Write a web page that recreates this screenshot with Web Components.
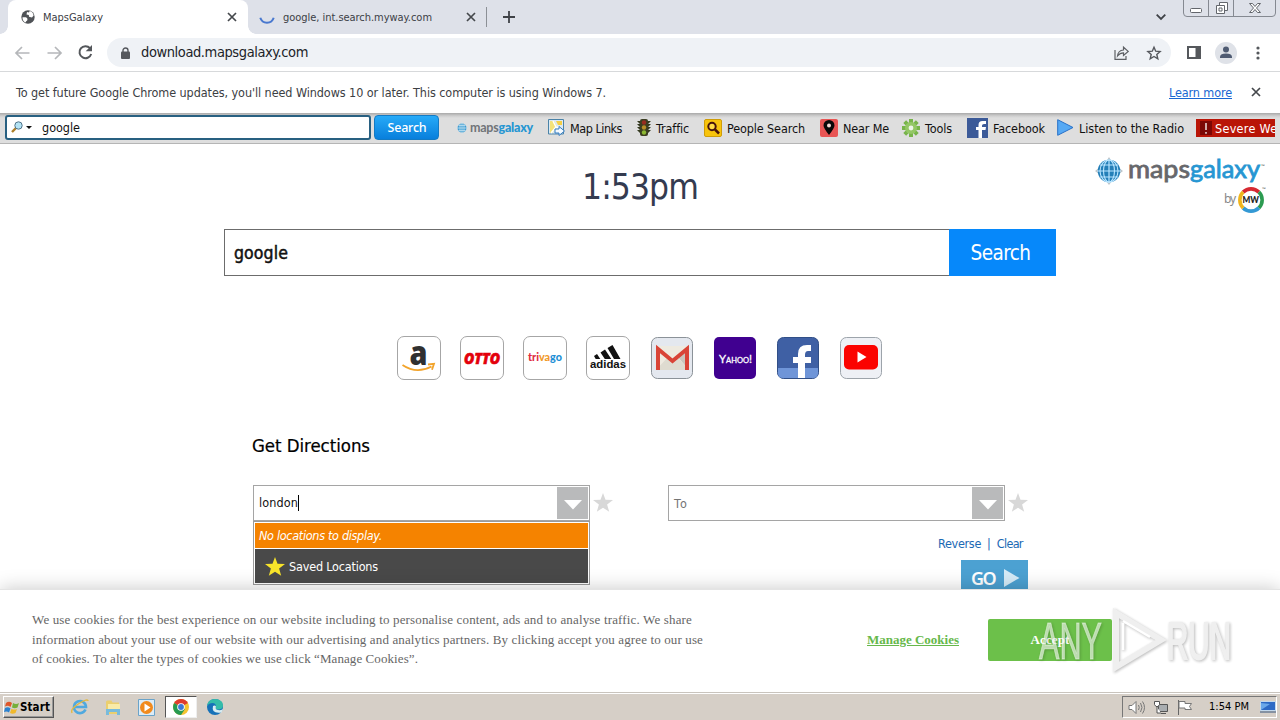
<!DOCTYPE html>
<html lang="en">
<head>
<meta charset="utf-8">
<title>MapsGalaxy</title>
<style>
  html, body { margin: 0; height: 100%; overflow: hidden; background: #fff; }
  body { font: 12.5px/1.2 "DejaVu Sans Condensed", "DejaVu Sans", sans-serif; color: #222; }
</style>
</head>
<body>
<desktop-screen></desktop-screen>
<script>
const ICONS = {
  globe: [14, 14, `<circle cx="7" cy="7" r="6.7" fill="#505357"/><path d="M1.5 7.2h3.2q1.8.3 1.8 2t-1.3 2l-.6 1.3Q1.3 11 1.5 7.2zM6 2l2 .4.7-1.3Q12 2 12.6 5.5L11 7.4 8 6.8 7.8 5 5.5 4.6z" fill="#fff"/>`],
  close: [10, 10, `<path d="M1 1l8 8M9 1L1 9" stroke="#45484c" stroke-width="1.7"/>`],
  spinner: [16, 8, `<path d="M1.3.8a7 7 0 0 0 13.4 0" fill="none" stroke="#4978cf" stroke-width="2"/>`],
  plus: [12, 12, `<path d="M6 0v12M0 6h12" stroke="#3f4247" stroke-width="1.8"/>`],
  chevron: [10, 6, `<path d="M.7.7L5 5 9.3.7" fill="none" stroke="#3f4247" stroke-width="1.8"/>`],
  winbtns: [93, 18, `<path d="M.5 0v13q0 3.5 3.5 3.5h85q3.5 0 3.5-3.5V0M25.5 0v16M50.5 0v16" fill="none" stroke="#858991"/><rect x="7.5" y="8.500" width="11" height="4" rx="1" fill="#fff" stroke="#63666c"/><path d="M36.500 2.500h8v8h-8z" fill="#fff" stroke="#63666c"/><path d="M33.500 5.500h8v8h-8z" fill="#fff" stroke="#63666c"/><path d="M36 8h3v3h-3z" fill="none" stroke="#63666c"/><path d="M66.500 3.500h3l2.500 3 2.500-3h3l-4 4.500 4 4.500h-3L72 9.500l-2.500 3h-3l4-4.500z" fill="#fff" stroke="#63666c"/>`],
  back: [15, 14, `<path d="M14.500 7H1.500M7 1L1 7l6 6" fill="none" stroke="#b5b7ba" stroke-width="1.700"/>`],
  forward: [15, 14, `<path d="M.5 7h13M8 1l6 6-6 6" fill="none" stroke="#b5b7ba" stroke-width="1.700"/>`],
  reload: [15, 15, `<path d="M12 3.200A6 6 0 1 0 13.200 9" fill="none" stroke="#54575b" stroke-width="2"/><path d="M14 0v6.300H7.700z" fill="#54575b"/>`],
  lock: [9, 12, `<path d="M2 5.500V3.500a2.500 2.500 0 0 1 5 0v2" fill="none" stroke="#55585d" stroke-width="1.400"/><rect y="4.500" width="9" height="7.500" rx="1" fill="#55585d"/>`],
  share: [15, 14, `<path d="M1 4v9.300h11V10M3.500 10q.5-5.500 6-6V1.200L14.200 5.400 9.500 9.500V6.800Q6 6.800 3.500 10z" fill="none" stroke="#5d6064" stroke-width="1.200"/>`],
  star: [14, 14, `<path d="M7 1.200l1.700 4 4.400.4-3.300 2.900 1 4.300L7 10.500l-3.800 2.300 1-4.300L.9 5.600l4.400-.4z" fill="none" stroke="#54575c" stroke-width="1.400"/>`],
  panel: [14, 13, `<path d="M1 1h12v11H1z" fill="#fff" stroke="#55585c" stroke-width="2"/><path d="M8.500 1H13v11H8.500z" fill="#55585c"/>`],
  person: [22, 22, `<circle cx="11" cy="11" r="11" fill="#dfe2e8"/><circle cx="11" cy="7.500" r="3" fill="#4f5b72"/><path d="M5 16v-1.500Q5.500 11.500 11 11.500t6 3V16z" fill="#4f5b72"/>`],
  dots: [4, 14, `<g fill="#55585c"><circle cx="2" cy="2" r="1.600"/><circle cx="2" cy="7" r="1.600"/><circle cx="2" cy="12" r="1.600"/></g>`],
  magnifier: [22, 12, `<path d="M0 11l4.500-4.500" stroke="#ad7f28" stroke-width="2.400"/><circle cx="6.500" cy="4.500" r="3.700" fill="#b4e3f4" stroke="#50738a"/><path d="M14 5h6L17 8z" fill="#111"/>`],
  miniGlobe: [12, 12, `<circle cx="6" cy="6" r="4.500" fill="#3d9bd2"/><path d="M0 6h12M6 0v12M2.500 3.500h7M2.500 8.500h7M4 2v8M8 2v8" stroke="#cce6f3" stroke-width=".7"/>`],
  map: [17, 17, `<path d="M.5.500h15v14.500H.5z" fill="#dceaf2" stroke="#4b83a8"/><path d="M2 2h4l3 6-5 6H2z" fill="#f3e27a"/><path d="M8 2h6v4h-4z" fill="#f5cf45"/><path d="M3 14l5-6-3-6M8 8l6 2" stroke="#fff" stroke-width="1.500" fill="none"/><path d="M7 10h4V7.500l5.500 4.500-5.500 4.500V14H7z" fill="#f4faff" stroke="#347dc1"/>`],
  traffic: [14, 17, `<path d="M0 2h14l-3 3h3l-3 3h3l-3 3h3l-3 3H3L0 11h3L0 8h3L0 5h3z" fill="#34391f"/><rect x="3" width="8" height="17" rx="2" fill="#3c3e22"/><circle cx="7" cy="3.500" r="2.200" fill="#982c20"/><circle cx="7" cy="8.500" r="2.200" fill="#b88e28"/><circle cx="7" cy="13.500" r="2.200" fill="#8db832"/>`],
  people: [18, 18, `<rect x=".5" y=".5" width="17" height="17" rx="1.500" fill="#f8c40c" stroke="#cf9d08"/><circle cx="8" cy="7.500" r="3.700" fill="#ffdd47" stroke="#47140c" stroke-width="2"/><path d="M11 10.500l4 4" stroke="#47140c" stroke-width="2.500"/>`],
  pin: [18, 18, `<rect width="18" height="18" rx="2" fill="#e85655"/><path d="M9 16Q3.500 9 3.500 6.500a5.500 5.500 0 0 1 11 0Q14.500 9 9 16z" fill="#090909"/><circle cx="9" cy="6.500" r="2" fill="#f6dad5"/>`],
  gear: [18, 18, `<g stroke="#78b44b" stroke-width="4"><path d="M9 0v18M0 9h18M2.700 2.700l12.600 12.600M15.300 2.700L2.700 15.300"/></g><circle cx="9" cy="9" r="6" fill="#94c766"/><circle cx="9" cy="9" r="2.400" fill="#eef4e9"/>`],
  fb: [21, 20, `<rect width="21" height="20" fill="#3c5a98"/><path d="M11.500 20v-8H9V9h2.500V7q0-4 4-4H19v3h-2q-2 0-2 1.600V9h4l-.5 3H15v8z" fill="#fff"/>`],
  play: [17, 17, `<path d="M.7.700L16 8.500.7 16.300z" fill="#56a9f4" stroke="#2770c8"/>`],
  alert: [12, 14, `<path d="M0 0h12v14H0z" fill="#7c0705"/><path d="M6 2v7M6 11v1.700" stroke="#fff" stroke-width="1.300"/>`],
  amazon: [44, 44, `<text x="12.500" y="28.500" font-family="Open Sans" font-weight="800" font-size="34" textLength="18" lengthAdjust="spacingAndGlyphs" fill="#303030">a</text><path d="M5.500 29q14 9.500 29 1.500M31 28.500l6-.7-2 6" fill="none" stroke="#f2a42c" stroke-width="1.800"/>`],
  otto: [44, 44, `<text x="4" y="27.800" font-family="Open Sans" font-weight="800" font-style="italic" font-size="16" textLength="36" lengthAdjust="spacingAndGlyphs" fill="#e3000b" stroke="#e3000b" stroke-width=".7">OTTO</text>`],
  trivago: [44, 44, `<text x="5" y="25" font-family="Lato" font-weight="900" font-size="11" textLength="34" lengthAdjust="spacingAndGlyphs"><tspan fill="#e02b43">tri</tspan><tspan fill="#f19a2b">va</tspan><tspan fill="#1d8fd5">go</tspan></text>`],
  adidas: [44, 44, `<path d="M8 20l3-2 3.300 5H9.700zM14.500 16.500l4.500-3L25.300 23h-6.500zM21.500 12l5-3L34.500 23H28z" fill="#111"/><text x="4" y="32" font-family="Liberation Sans" font-weight="bold" font-size="11.500" textLength="36" lengthAdjust="spacingAndGlyphs" fill="#111">adidas</text>`],
  gmail: [42, 42, `<rect x=".5" y=".5" width="41" height="41" rx="6" fill="#e4e8ef" stroke="#8b9298"/><path d="M5 9h33v24H5z" fill="#eeeae0"/><path d="M26 19l12-10v24z" fill="#c9c5bd"/><path d="M5 33l13-14 3.500 3 3.500-3 13 14z" fill="#dedbd0"/><path d="M7 33V12l14.500 12L36 12v21" fill="none" stroke="#d94437" stroke-width="4"/>`],
  yahoo: [42, 42, `<rect width="42" height="42" rx="5" fill="#400090"/><text x="5" y="25.500" font-family="Lato" font-size="12" style="font-variant-caps:small-caps" textLength="33" lengthAdjust="spacingAndGlyphs" fill="#fff" stroke="#fff" stroke-width=".3">Yahoo!</text>`],
  facebook: [42, 42, `<rect x=".5" y=".5" width="41" height="41" rx="6" fill="#3f60a4" stroke="#314f87"/><path d="M1 31h40v5q0 5-5 5H6q-5 0-5-5z" fill="#6f95d8"/><path d="M21 41V26h-5v-6h5v-3q0-9 9-9h4v6h-3q-3 0-3 4v2h6v6h-6v15z" fill="#fff"/>`],
  youtube: [42, 42, `<rect x=".5" y=".5" width="41" height="41" rx="6" fill="#eef0f5" stroke="#9da4ab"/><rect x="4" y="8" width="34" height="24.500" rx="5" fill="#fb0300"/><path d="M17.500 14.500v11l9-5.500z" fill="#fff"/>`],
  brand: [172, 56, `<path d="M14 0l3 5-3-2-3 2zM14 28l3-4-3 2-3-2zM0 14l4-3-2 3 2 3zM28 14l-4-3 2 3-2 3z" fill="#bbc3c8"/><circle cx="14" cy="14" r="11.300" fill="#247fb8"/><path d="M2.700 14h22.600M14 3v22M5 8h18M5 20h18" stroke="#b9e5ff" stroke-width="1.200"/><g fill="none" stroke="#b9e5ff" stroke-width="1.100"><ellipse cx="14" cy="14" rx="5.500" ry="11"/><ellipse cx="14" cy="14" rx="9" ry="11"/></g><g font-family="Lato" font-size="24.500" stroke-width=".8"><text x="33" y="21" textLength="62" lengthAdjust="spacingAndGlyphs" fill="#66676b" stroke="#66676b">maps</text><text x="95" y="21" textLength="70" lengthAdjust="spacingAndGlyphs" fill="#2696d2" stroke="#2696d2">galaxy</text></g><text x="166" y="11" font-family="Lato" font-size="5" fill="#555">™</text><text x="129" y="46" font-family="Noto Sans" font-size="12" textLength="12" fill="#888">by</text><g fill="none" stroke-width="3.600"><path d="M148.100 35.100a11.200 11.200 0 0 1 15.800 0" stroke="#d62931"/><path d="M163.900 35.100a11.200 11.200 0 0 1 0 15.800" stroke="#2c9b51"/><path d="M163.900 50.900a11.200 11.200 0 0 1-15.800 0" stroke="#3499d4"/><path d="M148.100 50.900a11.200 11.200 0 0 1 0-15.800" stroke="#f0b51d"/></g><text x="147.500" y="46.200" font-family="Lato" font-weight="900" font-size="9.500" textLength="16.500" lengthAdjust="spacingAndGlyphs" fill="#222">MW</text><text x="167" y="34" font-family="Lato" font-size="5" fill="#555">™</text>`],
  down: [18, 10, `<path d="M0 0h18L9 9.500z" fill="#fff"/>`],
  greyStar: [20, 19, `<path d="M10 0l2.500 6.800 7.500.3-5.900 4.500 2.100 7.200L10 14.700 3.800 18.800l2.100-7.200L0 7.100l7.500-.3z" fill="#d8d8d8"/>`],
  yellowStar: [20, 19, `<path d="M10 0l2.500 6.800 7.500.3-5.900 4.500 2.100 7.200L10 14.700 3.800 18.800l2.100-7.200L0 7.100l7.500-.3z" fill="#f8e42a"/>`],
  goArrow: [16, 18, `<path d="M0 0l15.500 9L0 18z" fill="#d5ebf7"/>`],
  flag: [15, 15, `<path d="M1 3q3-2.500 6 0L5.500 7Q3 5 0 6.500z" fill="#df572a"/><path d="M8 3q3 2 6 0L12.500 7.500q-3 1.500-5.500 0z" fill="#75af3a"/><path d="M0 8q3-1.700 5.500.500L4 12.500Q2 11-1 12z" fill="#2a82d0"/><path d="M6.500 8.700q2.500 1.600 5.500.3l-1.500 4q-3 1.500-5.500 0z" fill="#f0b92c"/>`],
  ie: [18, 16, `<path d="M14.500 10.500A6 6 0 1 1 15 8H4" fill="none" stroke="#50a9df" stroke-width="2.600"/><path d="M1 14Q-1 10 8 4.500T17 2" fill="none" stroke="#e4b83e" stroke-width="1.400"/>`],
  folder: [16, 17, `<path d="M1 3q0-1.500 1.500-1.500h4l1 2H14V15H1z" fill="#ebcf6f"/><path d="M3 5h12v8H3z" fill="#f9eba8"/><path d="M1 10h14v6h-3v-3H4v3H1z" fill="#79bbdc"/>`],
  media: [17, 17, `<path d="M.5.500h16v16H.5z" fill="#dcecf7" stroke="#6aa3c9"/><circle cx="8.500" cy="8.500" r="6.500" fill="#f18a1d"/><path d="M6.500 4.500v8l6-4z" fill="#fff"/>`],
  chrome: [16, 16, `<circle cx="8" cy="8" r="8" fill="#f5c431"/><path d="M8 8L1.100 4A8 8 0 0 1 14.900 4z" fill="#df3c2f"/><path d="M8 8L1.100 4A8 8 0 0 0 8 16l4-6z" fill="#279a51"/><circle cx="8" cy="8" r="3.800" fill="#fff"/><circle cx="8" cy="8" r="2.900" fill="#3c79d7"/>`],
  edge: [16, 16, `<circle cx="8" cy="8" r="8" fill="#1671b8"/><path d="M0 7Q1 0 8 0q8 .5 8 6.500 0 4-5 4-3 0-2-2.500Q9 4 5.500 4T0 7z" fill="#34bca9"/><path d="M6 7q-2 8 8.500 6.500L16 10q-3 2-6 .8Q8 10 9 7.500 8 6 6 7z" fill="#d8edf2"/>`],
  sound: [17, 15, `<path d="M1 5.500h3l4-4v12l-4-4H1z" fill="#fff" stroke="#777"/><path d="M10.500 5q1.500 2.500 0 5M12.500 3q3 4.500 0 9M14.500 1.500q4 6 0 12" fill="none" stroke="#777"/>`],
  network: [16, 15, `<path d="M5.500 4.500h9v7h-9zM8 13.500h5" fill="#a9adb0" stroke="#555"/><path d="M1.500 1.500h5v3l-1.500 2H3L1.500 4.500zM4 7v6h4" fill="#fff" stroke="#555"/>`],
  trayFlag: [16, 15, `<path d="M1.500 0v15" stroke="#666"/><path d="M2 1.500h6v2h6.500l-2 3 2 3H8v-1.500H2z" fill="#fff" stroke="#777"/>`],
  monitor: [16, 12, `<path d="M.5.500h15v9H.5z" fill="#2c69c5" stroke="#c2d8ec"/><path d="M1 9V2l9 1z" fill="#6aa8ea"/><path d="M0 11h16" stroke="#34557d"/>`],
  anyrun: [200, 66, `<g opacity=".9" style="filter:drop-shadow(1px 1px 1.500px rgba(0,0,0,.3))"><text x="5" y="52" font-family="Liberation Sans Narrow, Liberation Sans" font-size="51" textLength="63" lengthAdjust="spacingAndGlyphs" fill="#fff" fill-opacity=".65" stroke="#fff" stroke-opacity=".5">ANY</text><path d="M82 6v54l45-27z" fill="none" stroke="#eee" stroke-width="6"/><path d="M89 16v27M89 14l27 16" stroke="#fff" stroke-width="2.500"/><text x="133" y="52" font-family="Liberation Sans Narrow, Liberation Sans" font-size="51" textLength="64" lengthAdjust="spacingAndGlyphs" fill="#eee" stroke="#eee" stroke-width="2">RUN</text></g>`]
};

class BaseElement extends HTMLElement {
  constructor() {
    super();
    this.attachShadow({ mode: "open" });
  }

  connectedCallback() {
    this.shadowRoot.innerHTML = `<style>:host { display: block; box-sizing: border-box; } * { box-sizing: border-box; } ${this.constructor.styles || ""}</style>${this.render()}`;
  }

  render() {
    return "<slot></slot>";
  }
}

class PixelIcon extends BaseElement {
  static styles = `:host { flex: none; line-height: 0; } svg { display: block; overflow: visible; }`;

  render() {
    const [w, h, body] = ICONS[this.getAttribute("name")];
    return `<svg width="${w}" height="${h}" viewBox="0 0 ${w} ${h}">${body}</svg>`;
  }
}

/* One line of text, letter-spaced to fill the width in its w attribute. */
class FitText extends BaseElement {
  static styles = `:host { display: block; flex: none; width: max-content; white-space: pre; }`;

  connectedCallback() {
    super.connectedCallback();
    const width = Number(this.getAttribute("w"));
    const extra = (width - this.getBoundingClientRect().width) / this.textContent.length;
    this.style.letterSpacing = `${extra}px`;
    this.style.width = `${width}px`;
  }
}

class TabStrip extends BaseElement {
  static styles = `
    :host { height: 34px; background: #dee1e9; display: flex; padding-left: 8px; font-size: 11px; color: #3c4046; }
    .tab { display: flex; align-items: center; height: 34px; width: 240px; padding: 0 11px 0 13px; position: relative; }
    .active { background: #fff; border-radius: 8px 8px 0 0; }
    .active:before, .active:after { content: ""; position: absolute; bottom: 0; width: 8px; height: 8px; }
    .active:before { left: -8px; background: radial-gradient(circle at 0 0, transparent 7.5px, #fff 8px); }
    .active:after { right: -8px; background: radial-gradient(circle at 100% 0, transparent 7.5px, #fff 8px); }
    .title { margin-left: 8px; padding-top: 1px; }
    .close { margin-left: auto; }
    .second { width: 238px; padding: 0 10px 0 11px; }
    .spinner { margin-top: 8px; }
    .line { width: 1px; height: 20px; background: #8c9096; margin: 7px 16px 0 0; }
    .plus { margin-top: 11px; }
    .chevron { margin: 14px 17px 0 auto; }
    .win { margin-right: 4px; }
  `;

  render() {
    return `
      <div class="tab active"><pixel-icon name="globe"></pixel-icon><fit-text class="title" w="60">MapsGalaxy</fit-text><pixel-icon class="close" name="close"></pixel-icon></div>
      <div class="tab second"><pixel-icon class="spinner" name="spinner"></pixel-icon><fit-text class="title" w="149">google, int.search.myway.com</fit-text><pixel-icon class="close" name="close"></pixel-icon></div>
      <div class="line"></div><pixel-icon class="plus" name="plus"></pixel-icon>
      <pixel-icon class="chevron" name="chevron"></pixel-icon><pixel-icon class="win" name="winbtns"></pixel-icon>`;
  }
}

class AddressBar extends BaseElement {
  static styles = `
    :host { height: 38px; background: #fff; border-bottom: 1px solid #d7d9db; display: flex; align-items: center; padding: 0 20px 0 15px; }
    .forward { margin-left: 17px; }
    .reload { margin-left: 16px; }
    .omnibox { width: 1064px; height: 29px; margin-left: 14px; border-radius: 15px; background: #eff2f6; display: flex; align-items: center; padding: 0 10px 0 14px; }
    .url { font-size: 14.5px; margin-left: 11px; padding-top: 1px; color: #202328; }
    .share { margin-left: auto; }
    .star { margin-left: 18px; }
    .panel { margin-left: 16px; }
    .person { margin-left: 14px; }
    .dots { margin-left: auto; }
  `;

  render() {
    return `
      <pixel-icon name="back"></pixel-icon><pixel-icon class="forward" name="forward"></pixel-icon><pixel-icon class="reload" name="reload"></pixel-icon>
      <div class="omnibox"><pixel-icon name="lock"></pixel-icon><fit-text class="url" w="167">download.mapsgalaxy.com</fit-text>
      <pixel-icon class="share" name="share"></pixel-icon><pixel-icon class="star" name="star"></pixel-icon></div>
      <pixel-icon class="panel" name="panel"></pixel-icon><pixel-icon class="person" name="person"></pixel-icon><pixel-icon class="dots" name="dots"></pixel-icon>`;
  }
}

class InfoBar extends BaseElement {
  static styles = `
    :host { height: 41px; display: flex; align-items: center; padding: 0 19px 1px 16px; color: #3c4043; }
    .link { margin-left: auto; color: #1967d2; text-decoration: underline; }
    .close { margin-left: 19px; }
  `;

  render() {
    return `<fit-text w="590">To get future Google Chrome updates, you'll need Windows 10 or later. This computer is using Windows 7.</fit-text>
      <fit-text class="link" w="63">Learn more</fit-text><pixel-icon class="close" name="close"></pixel-icon>`;
  }
}

class ToolItem extends BaseElement {
  static styles = `:host { display: flex; align-items: center; flex: none; gap: 5px; color: #111; } fit-text { padding-top: 1px; }`;

  render() {
    return `<pixel-icon name="${this.getAttribute("icon")}"></pixel-icon><fit-text w="${this.getAttribute("w")}">${this.getAttribute("label")}</fit-text>`;
  }
}

class MapsToolbar extends BaseElement {
  static styles = `
    :host { height: 31px; background: linear-gradient(#a9a9a9, #cfcfcf 3px, #dedede 5px, #dedede); border-bottom: 1px solid #b5b5b5; display: flex; align-items: center; padding: 0 5px 1px; }
    .input { flex: none; width: 366px; height: 25px; margin-bottom: 1px; background: #fff; border: 2px solid #286081; border-radius: 3px; display: flex; align-items: center; padding-left: 5px; color: #111; }
    .input fit-text { margin-left: 8px; padding-top: 1px; }
    .btn { flex: none; margin: 0 0 1px 3px; width: 65px; height: 25px; border-radius: 4px; border: 1px solid #137ac4; background: linear-gradient(#26aaf8, #087fdc); color: #fff; display: grid; place-items: center; padding-left: 1px; font: 500 12.5px/1.2 "Noto Sans", sans-serif; }
    .logo { flex: none; display: flex; align-items: center; margin: 0 15px 0 17px; font: bold 12.5px Lato; color: #707478; gap: 2px; }
    .logo b { color: #2696d2; }
    .severe { flex: none; margin-left: 12px; width: 79px; height: 18px; background: #b91507; overflow: hidden; display: flex; align-items: center; padding-left: 4px; gap: 3px; color: #fff; }
    .severe fit-text { padding-top: 1px; }
  `;

  render() {
    return `
      <div class="input"><pixel-icon name="magnifier"></pixel-icon><fit-text w="38">google</fit-text></div>
      <div class="btn"><fit-text w="39">Search</fit-text></div>
      <div class="logo"><pixel-icon name="miniGlobe"></pixel-icon><fit-text w="63">maps<b>galaxy</b></fit-text></div>
      <tool-item icon="map" label="Map Links" w="52" style="margin-right:15px"></tool-item>
      <tool-item icon="traffic" label="Traffic" w="33" style="margin-right:15px"></tool-item>
      <tool-item icon="people" label="People Search" w="78" style="margin-right:15px"></tool-item>
      <tool-item icon="pin" label="Near Me" w="46" style="margin-right:13px"></tool-item>
      <tool-item icon="gear" label="Tools" w="27" style="margin-right:15px"></tool-item>
      <tool-item icon="fb" label="Facebook" w="52" style="margin-right:12px"></tool-item>
      <tool-item icon="play" label="Listen to the Radio" w="105"></tool-item>
      <div class="severe"><pixel-icon name="alert"></pixel-icon><fit-text w="94">Severe Weather</fit-text></div>`;
  }
}

class QuickTile extends BaseElement {
  static styles = `
    :host { flex: none; width: 44px; height: 44px; border: 1px solid #a6a6a6; border-radius: 7px; display: grid; place-items: center; }
    :host([plain]) { border: 0; width: 42px; height: 44px; }
    pixel-icon { margin: -1px; }
  `;

  render() {
    return `<pixel-icon name="${this.getAttribute("icon")}"></pixel-icon>`;
  }
}

class PlaceField extends BaseElement {
  static styles = `
    :host { display: flex; align-items: flex-start; }
    .box { position: relative; width: 337px; height: 36px; border: 1px solid #a5a5a5; display: flex; align-items: center; background: #fff; padding: 0 1px 0 5px; }
    .arrow { margin-left: auto; width: 31px; height: 32px; background: #b9babb; display: grid; place-items: center; padding-top: 4px; }
    .fav { margin: 8px 0 0 3px; }
  `;

  render() {
    return `<div class="box"><slot></slot><div class="arrow"><pixel-icon name="down"></pixel-icon></div><slot name="menu"></slot></div><pixel-icon class="fav" name="greyStar"></pixel-icon>`;
  }
}

class PlaceMenu extends BaseElement {
  static styles = `
    :host { position: absolute; top: 35px; left: -1px; width: 337px; height: 64px; border: 1px solid #9b9b9b; background: #fff; padding: 1px; color: #fff; }
    .none { height: 25px; background: #f58300; display: flex; align-items: center; padding-left: 4px; font-style: italic; margin-bottom: 1px; }
    .saved { height: 34px; background: #494949; display: flex; align-items: center; padding: 0 0 0 10px; gap: 4px; }
  `;

  render() {
    return `<div class="none"><fit-text w="123">No locations to display.</fit-text></div><div class="saved"><pixel-icon name="yellowStar"></pixel-icon><fit-text w="89">Saved Locations</fit-text></div>`;
  }
}

class CookieBanner extends BaseElement {
  static styles = `
    :host { position: absolute; left: 0; right: 0; bottom: 0; height: 103px; background: #fff; box-shadow: 0 0 18px rgba(0,0,0,.22); border-top: 1px solid #e4e4e4; display: flex; align-items: center; padding: 0 0 3px 32px; font: 13px/19.5px "Liberation Serif", serif; color: #666; }
    .text { width: 835px; }
    .manage { color: #66b84b; font-weight: bold; text-decoration: underline; }
    .accept { margin-left: 29px; width: 124px; height: 42px; border-radius: 2px; background: #6cc04a; color: #fff; font-weight: bold; display: grid; place-items: center; }
    .mark { position: absolute; left: 1034px; top: 17px; }
  `;

  render() {
    return `
      <div class="text">
        <fit-text w="660">We use cookies for the best experience on our website including to personalise content, ads and to analyse traffic. We share</fit-text>
        <fit-text w="671">information about your use of our website with our advertising and analytics partners. By clicking accept you agree to our use</fit-text>
        <fit-text w="386">of cookies. To alter the types of cookies we use click “Manage Cookies”.</fit-text>
      </div>
      <fit-text class="manage" w="92">Manage Cookies</fit-text>
      <div class="accept"><fit-text w="39">Accept</fit-text></div>
      <pixel-icon class="mark" name="anyrun"></pixel-icon>`;
  }
}

class StartPage extends BaseElement {
  static styles = `
    :host { position: relative; overflow: hidden; background: #fff; }
    .brand { position: absolute; left: 1095px; top: 13px; }
    .clock { font-size: 35px; line-height: 42px; color: #343b50; margin: 22px auto 0; }
    .search { width: 832px; height: 47px; margin: 21px auto 0; border: 1px solid #6c6c6c; display: flex; align-items: center; padding-left: 9px; color: #111; font-size: 17.5px; -webkit-text-stroke: .5px; }
    .search > fit-text { padding-top: 2px; }
    .search .btn { margin: -1px -1px -1px auto; width: 107px; height: 47px; background: #0688fa; color: #fff; display: grid; place-items: center; font-size: 20.5px; padding: 2px 4px 0 0; -webkit-text-stroke: 0; }
    .tiles { display: flex; gap: 19px; margin: 60px 0 0 397px; }
    .tiles quick-tile[plain] { margin-left: 2px; }
    h2 { margin: 53px 0 0 252px; height: 25px; font-size: 18.5px; line-height: 25px; font-weight: normal; -webkit-text-stroke: .2px; color: #000; }
    .fields { display: flex; margin: 27px 0 0 253px; gap: 55px; }
    .typed { color: #111; border-right: 1px solid #000; line-height: 16px; }
    .hint { color: #747474; }
    .links { display: flex; margin: 15px 0 0 938px; gap: 6px; color: #1b69b4; line-height: 16px; }
    .go { width: 67px; height: 37px; margin: 8px 0 0 961px; background: #4ca1d2; color: #fff; font: 600 18px/1.2 "Noto Sans", sans-serif; display: flex; align-items: center; padding: 0 0 0 10px; gap: 9px; }
    .go fit-text { padding-top: 1px; }
    .go pixel-icon { margin-bottom: 2px; }
  `;

  render() {
    return `
      <pixel-icon class="brand" name="brand"></pixel-icon>
      <fit-text class="clock" w="116">1:53pm</fit-text>
      <div class="search"><fit-text w="54">google</fit-text><div class="btn"><fit-text w="60">Search</fit-text></div></div>
      <div class="tiles">
        <quick-tile icon="amazon"></quick-tile><quick-tile icon="otto"></quick-tile><quick-tile icon="trivago"></quick-tile><quick-tile icon="adidas"></quick-tile>
        <quick-tile plain icon="gmail"></quick-tile><quick-tile plain icon="yahoo"></quick-tile><quick-tile plain icon="facebook"></quick-tile><quick-tile plain icon="youtube"></quick-tile>
      </div>
      <h2><fit-text w="118">Get Directions</fit-text></h2>
      <div class="fields">
        <place-field><fit-text class="typed" w="40">london</fit-text><place-menu slot="menu"></place-menu></place-field>
        <place-field><fit-text class="hint" w="14">To</fit-text></place-field>
      </div>
      <div class="links"><fit-text w="43">Reverse</fit-text><span>|</span><fit-text w="26">Clear</fit-text></div>
      <div class="go"><fit-text w="24">GO</fit-text><pixel-icon name="goArrow"></pixel-icon></div>
      <cookie-banner></cookie-banner>`;
  }
}

class TaskBar extends BaseElement {
  static styles = `
    :host { height: 28px; background: #d6cfc7; border-top: 1px solid #c9c4bd; box-shadow: inset 0 1px #fff; display: flex; align-items: center; padding: 1px 3px 0 3px; color: #000; font-size: 11px; }
    .start { width: 51px; height: 22px; border: 1px solid; border-color: #fff #555 #555 #fff; box-shadow: inset -1px -1px #999; display: flex; align-items: center; font: bold 11.5px "DejaVu Sans Condensed", sans-serif; gap: 0; padding-left: 1px; }
    .ie { margin-left: 17px; }
    .folder { margin-left: 16px; }
    .media { margin-left: 17px; }
    .active { width: 32px; height: 22px; margin: 0 10px 0 10px; background: #fff; border: 1px solid; border-color: #555 #eee #eee #555; display: grid; place-items: center; }
    .tray { margin-left: auto; width: 155px; height: 22px; border: 1px solid; border-color: #777 #fff #fff #777; display: flex; align-items: center; padding: 0 0 0 5px; }
    .tray .net { margin-left: 8px; }
    .tray .flag { margin-left: 8px; }
    .tray fit-text { margin-left: 16px; }
    .tray .monitor { margin-left: 11px; }
  `;

  render() {
    return `
      <div class="start"><pixel-icon name="flag"></pixel-icon><fit-text w="30">Start</fit-text></div>
      <pixel-icon class="ie" name="ie"></pixel-icon><pixel-icon class="folder" name="folder"></pixel-icon><pixel-icon class="media" name="media"></pixel-icon>
      <div class="active"><pixel-icon name="chrome"></pixel-icon></div><pixel-icon name="edge"></pixel-icon>
      <div class="tray"><pixel-icon name="sound"></pixel-icon><pixel-icon class="net" name="network"></pixel-icon><pixel-icon class="flag" name="trayFlag"></pixel-icon><fit-text w="40">1:54 PM</fit-text><pixel-icon class="monitor" name="monitor"></pixel-icon></div>`;
  }
}

class DesktopScreen extends BaseElement {
  static styles = `
    :host { display: flex; flex-direction: column; width: 1280px; height: 720px; overflow: hidden; }
    tab-strip, address-bar, info-bar, maps-toolbar, task-bar { flex: none; }
    start-page { flex: 1; min-height: 0; }
  `;

  render() {
    return `<tab-strip></tab-strip><address-bar></address-bar><info-bar></info-bar><maps-toolbar></maps-toolbar><start-page></start-page><task-bar></task-bar>`;
  }
}

customElements.define("desktop-screen", DesktopScreen);
customElements.define("tab-strip", TabStrip);
customElements.define("address-bar", AddressBar);
customElements.define("info-bar", InfoBar);
customElements.define("maps-toolbar", MapsToolbar);
customElements.define("tool-item", ToolItem);
customElements.define("start-page", StartPage);
customElements.define("quick-tile", QuickTile);
customElements.define("place-field", PlaceField);
customElements.define("place-menu", PlaceMenu);
customElements.define("cookie-banner", CookieBanner);
customElements.define("task-bar", TaskBar);
customElements.define("pixel-icon", PixelIcon);
// last, so that the text is measured with every surrounding style in place
customElements.define("fit-text", FitText);
</script>
</body>
</html>
